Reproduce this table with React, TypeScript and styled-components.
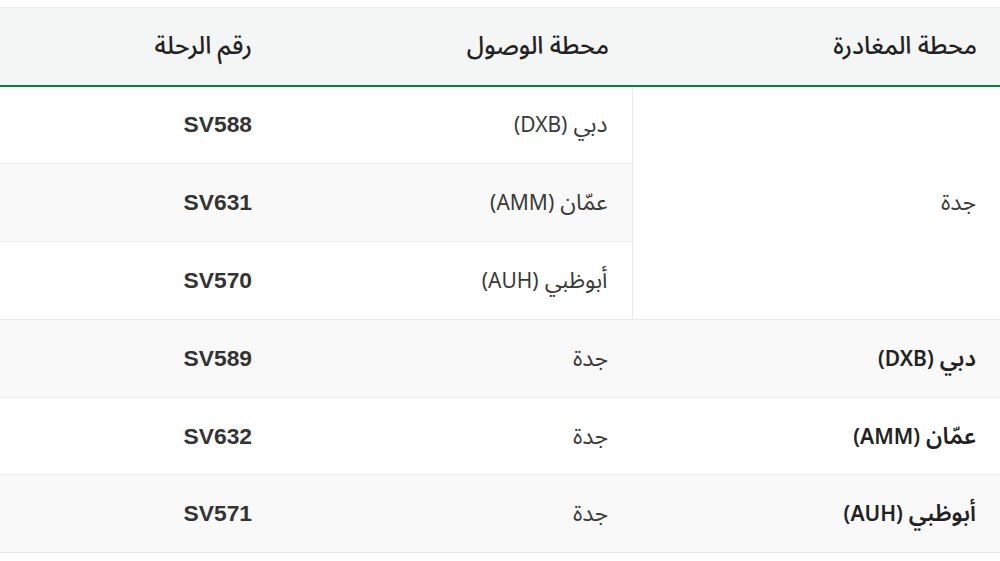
import React from "react";
import styled, { createGlobalStyle } from "styled-components";

const Global = createGlobalStyle`
  html, body { margin: 0; padding: 0; background: #ffffff; }
  body { font-family: "Noto Sans Arabic", "Noto Sans", "DejaVu Sans", sans-serif; }
`;

const Page = styled.div`
  padding-top: 7px;
  width: 1000px;
  overflow: hidden;
`;

const Table = styled.table`
  width: 1000px;
  border-collapse: collapse;
  table-layout: fixed;
  direction: rtl;
  border-top: 1px solid #ececec;
  border-bottom: 1px solid #e6e6e6;
`;

const HeadCell = styled.th<{ $w: number }>`
  width: ${(p) => p.$w}px;
  height: 78px;
  box-sizing: border-box;
  padding: 0 ${(p) => (p.$w === 276 ? 24 : 23)}px;
  background: #f4f5f5;
  border-bottom: 2px solid #00843d;
  text-align: right;
  font-weight: 500;
  font-size: 24.5px;
  color: #222;
`;

const Row = styled.tr<{ $alt: boolean }>`
  height: 77.9px;
  background: ${(p) => (p.$alt ? "#f9f9f9" : "#ffffff")};
  border-top: 1px solid #ebebeb;
`;

const Cell = styled.td<{ $strong?: boolean; $span?: boolean }>`
  padding: 0 24px 0 ${(p) => (p.$span ? 23 : 24)}px;
  text-align: right;
  vertical-align: middle;
  font-size: 23px;
  color: ${(p) => (p.$strong ? "#222" : "#3a3a3a")};
  font-weight: ${(p) => (p.$strong ? 600 : 400)};
  background: ${(p) => (p.$span ? "#ffffff" : "inherit")};
  border-left: ${(p) => (p.$span ? "1px solid #ebebeb" : "none")};
`;

const FlightNo = styled.td`
  padding: 0 24px;
  text-align: right;
  vertical-align: middle;
  font-family: "Liberation Sans", Arial, sans-serif;
  font-weight: 700;
  font-size: 22.8px;
  color: #333;
`;

const Latin = styled.span`
  font-family: "Noto Sans", sans-serif;
  font-size: 21px;
`;

type Flight = { from?: string; fromSpan?: number; to: string; no: string; strongFrom?: boolean };

const rows: Flight[] = [
  { from: "جدة", fromSpan: 3, to: "دبي (DXB)", no: "SV588" },
  { to: "عمّان (AMM)", no: "SV631" },
  { to: "أبوظبي (AUH)", no: "SV570" },
  { from: "دبي (DXB)", to: "جدة", no: "SV589", strongFrom: true },
  { from: "عمّان (AMM)", to: "جدة", no: "SV632", strongFrom: true },
  { from: "أبوظبي (AUH)", to: "جدة", no: "SV571", strongFrom: true },
];

const renderText = (t: string) => {
  const m = t.match(/^(.*?)(\(.*\))$/);
  if (!m) return t;
  return (
    <>
      {m[1]}
      <Latin>{m[2]}</Latin>
    </>
  );
};

export default function App() {
  return (
    <Page>
      <Global />
      <Table>
        <thead>
          <tr>
            <HeadCell $w={368}>محطة المغادرة</HeadCell>
            <HeadCell $w={356}>محطة الوصول</HeadCell>
            <HeadCell $w={276}>رقم الرحلة</HeadCell>
          </tr>
        </thead>
        <tbody>
          {rows.map((r, i) => (
            <Row key={r.no} $alt={i % 2 === 1}>
              {r.from !== undefined && (
                <Cell rowSpan={r.fromSpan} $span={!!r.fromSpan} $strong={r.strongFrom}>
                  {renderText(r.from)}
                </Cell>
              )}
              <Cell>{renderText(r.to)}</Cell>
              <FlightNo>{r.no}</FlightNo>
            </Row>
          ))}
        </tbody>
      </Table>
    </Page>
  );
}
